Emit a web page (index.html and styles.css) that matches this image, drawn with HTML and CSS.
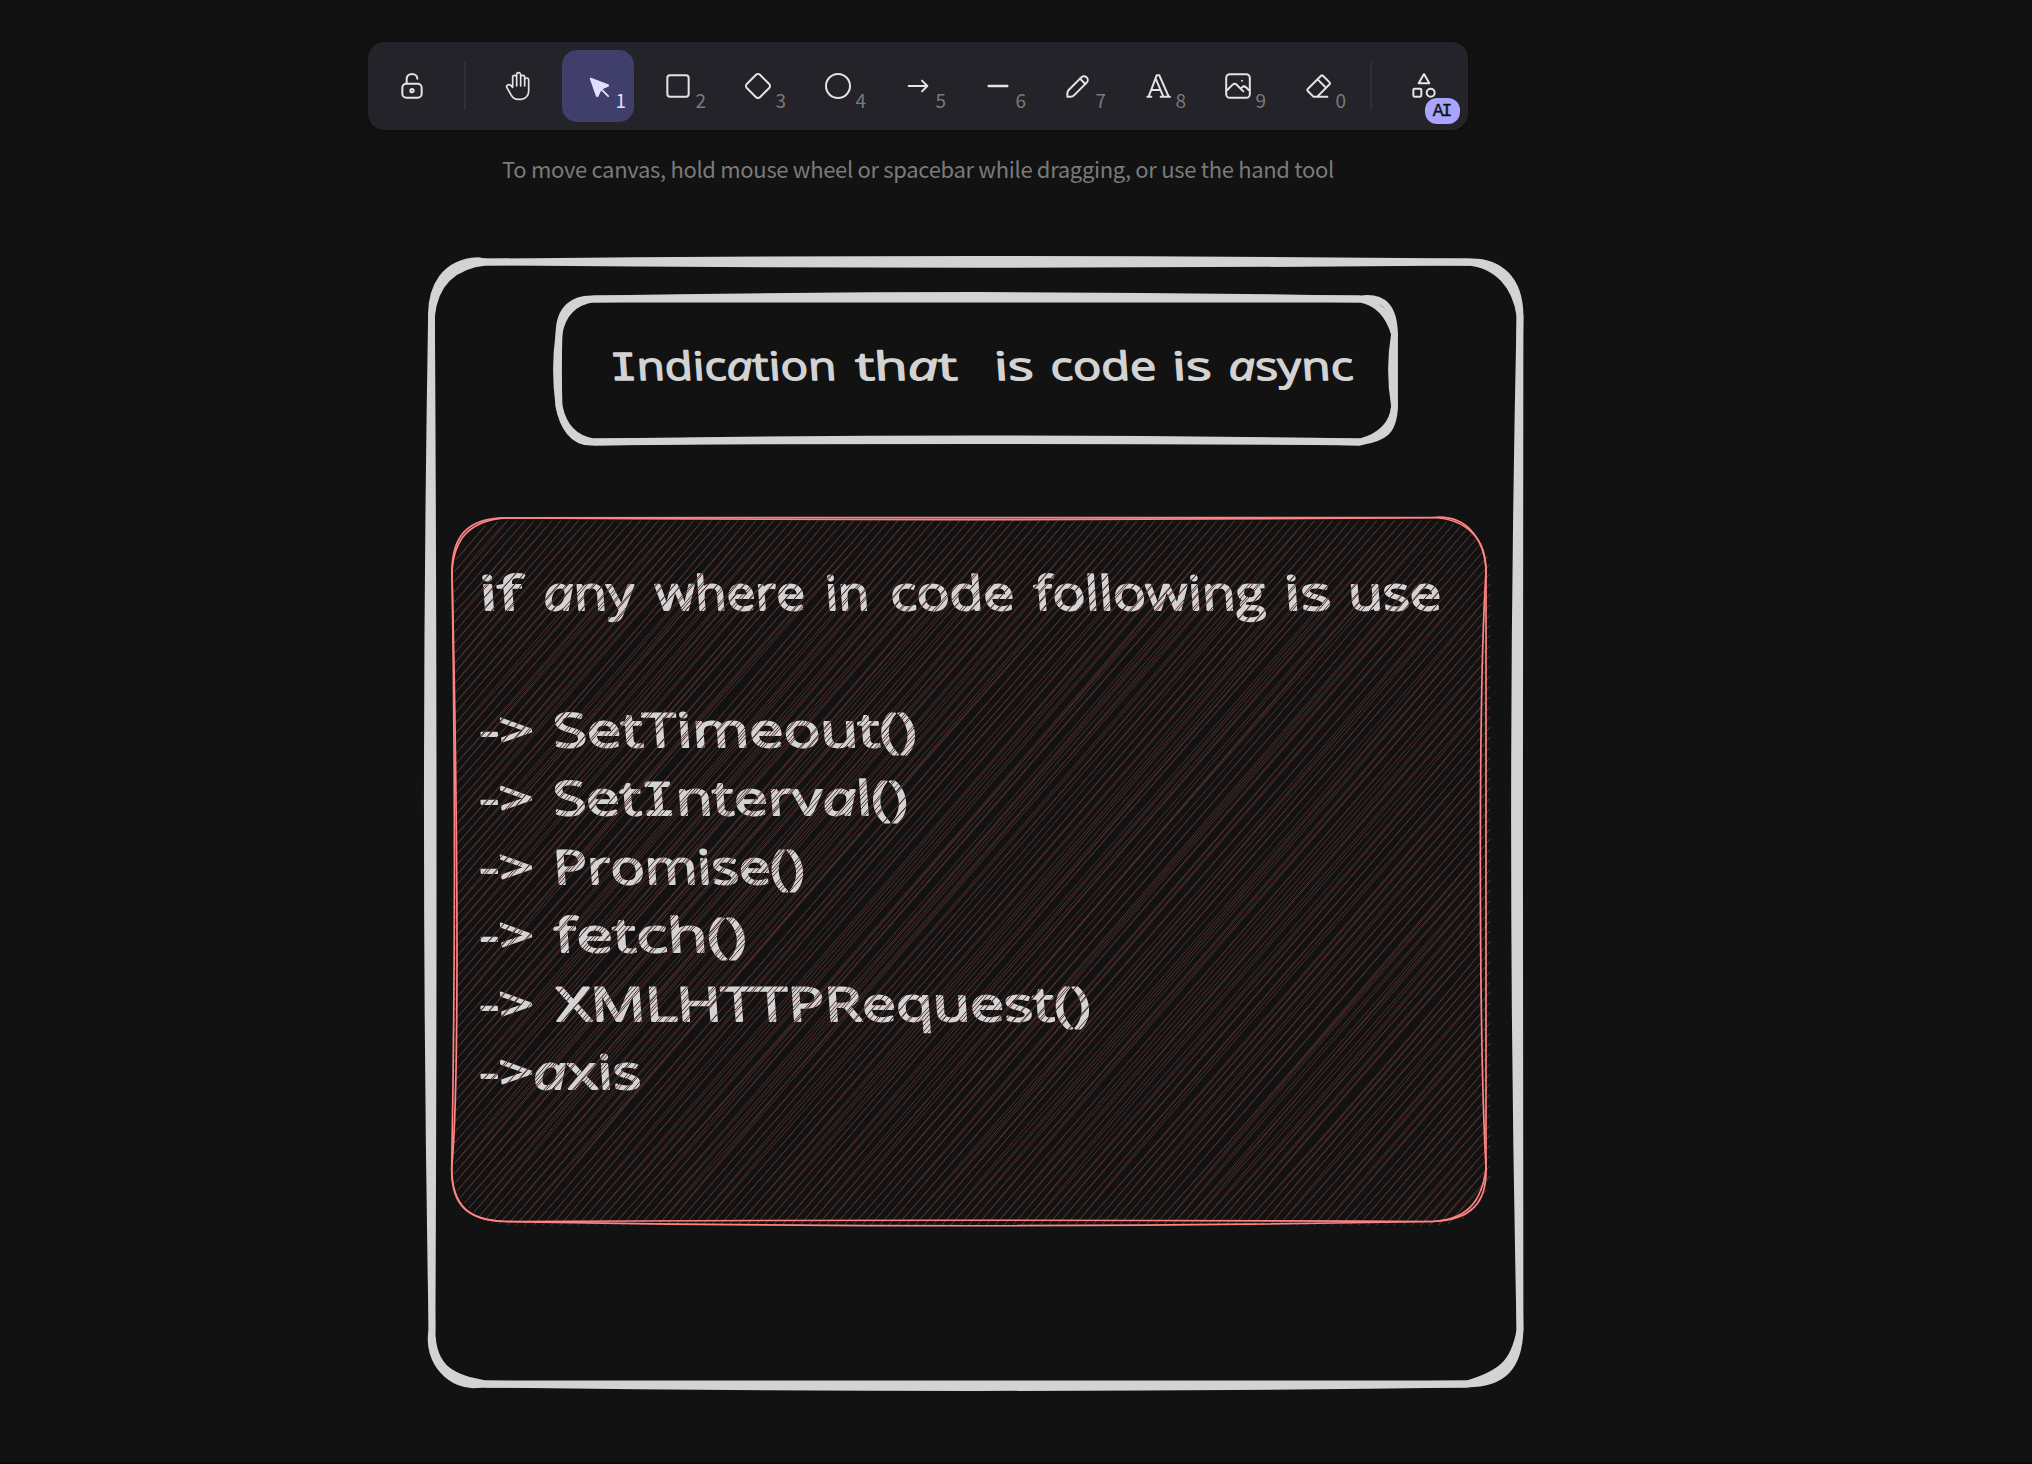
FILE: index.html
```html
<!DOCTYPE html>
<html lang="en">
<head>
<meta charset="utf-8">
<title>Whiteboard</title>
<link rel="stylesheet" href="styles.css">
</head>
<body>
<main class="board">
  <svg class="canvas" viewBox="0 0 2032 1464" aria-label="Drawing">
    <g class="frame">
      <path d="M486 262Q976 257 1467 262C1500 260 1520 280 1520 316Q1519 823 1520 1330C1519 1366 1504 1384 1467 1384Q976 1391 486 1384L478 1384.5C452 1388 426 1362 432 1330Q423 823 431.5 316C431 288 444 262 478 260.7L486 262"/>
      <path d="M486 262Q976 266.6 1467 262C1497 264 1516 286 1520 316Q1509 823 1520 1330C1514 1364 1500 1374 1467 1384Q976 1383.6 486 1384C456 1378 432 1372 432 1330Q434.5 823 431.5 316C434 290 447 266 486 262"/>
      <path d="M594 299Q976 292 1359.500 299C1384 295 1394 308 1394.500 334Q1394.500 370 1394.500 406C1394 432 1384 438 1360 442Q976 435.600 594 442C572 444 562 424 559 406Q554 370 559 334C559 308 574 298 594 299"/>
      <path d="M594 299Q976 299 1359.500 299C1376 302 1388 312 1394.500 334Q1388.500 370 1394.500 406C1393 424 1382 436 1360 442Q976 439 594 442C574 439 563 426 559 406Q558 370 559 334C562 316 572 302 594 299"/>
    </g>
    <g class="label title">
      <text x="611" y="380" textLength="226" lengthAdjust="spacingAndGlyphs"><tspan class="slab">I</tspan>ndic<tspan class="round">a</tspan>tion</text>
      <text x="856" y="380" textLength="102" lengthAdjust="spacingAndGlyphs">th<tspan class="round">a</tspan>t</text>
      <text x="995" y="380" textLength="39" lengthAdjust="spacingAndGlyphs">is</text>
      <text x="1051" y="380" textLength="106" lengthAdjust="spacingAndGlyphs">code</text>
      <text x="1173" y="380" textLength="39" lengthAdjust="spacingAndGlyphs">is</text>
      <text x="1229" y="380" textLength="125" lengthAdjust="spacingAndGlyphs"><tspan class="round">a</tspan>sync</text>
    </g>
    <g class="label">
      <text x="480" y="610" textLength="43" lengthAdjust="spacingAndGlyphs">if</text>
      <text x="544" y="610" textLength="91" lengthAdjust="spacingAndGlyphs"><tspan class="round">a</tspan>ny</text>
      <text x="656" y="610" textLength="150" lengthAdjust="spacingAndGlyphs">where</text>
      <text x="826" y="610" textLength="44" lengthAdjust="spacingAndGlyphs">in</text>
      <text x="891" y="610" textLength="124" lengthAdjust="spacingAndGlyphs">code</text>
      <text x="1035" y="610" textLength="231" lengthAdjust="spacingAndGlyphs">following</text>
      <text x="1285" y="610" textLength="47" lengthAdjust="spacingAndGlyphs">is</text>
      <text x="1349" y="610" textLength="93" lengthAdjust="spacingAndGlyphs">use</text>

      <text x="480" y="747" textLength="55" lengthAdjust="spacingAndGlyphs">-&gt;</text>
      <text x="554" y="747" textLength="363" lengthAdjust="spacingAndGlyphs">SetTimeout()</text>
      <text x="480" y="815" textLength="55" lengthAdjust="spacingAndGlyphs">-&gt;</text>
      <text x="554" y="815" textLength="354" lengthAdjust="spacingAndGlyphs">Set<tspan class="slab">I</tspan>nterv<tspan class="round">a</tspan>l()</text>
      <text x="480" y="884" textLength="55" lengthAdjust="spacingAndGlyphs">-&gt;</text>
      <text x="554" y="884" textLength="251" lengthAdjust="spacingAndGlyphs">Promise()</text>
      <text x="480" y="952" textLength="55" lengthAdjust="spacingAndGlyphs">-&gt;</text>
      <text x="555" y="952" textLength="192" lengthAdjust="spacingAndGlyphs">fetch()</text>
      <text x="480" y="1021" textLength="55" lengthAdjust="spacingAndGlyphs">-&gt;</text>
      <text x="557" y="1021" textLength="534" lengthAdjust="spacingAndGlyphs">XMLHTTPRequest()</text>
      <text x="480" y="1089" textLength="55" lengthAdjust="spacingAndGlyphs">-&gt;</text>
      <text x="534" y="1089" textLength="108" lengthAdjust="spacingAndGlyphs"><tspan class="round">a</tspan>xis</text>
    </g>
    <path class="hatch" id="hatch"/>
    <g class="red">
      <path d="M505 517.800Q970 518.800 1433 517.500C1466 519 1486 538 1486 571Q1485 870 1486 1168C1487 1202 1472 1220 1433 1221.500Q970 1230 505 1221.500C468 1220 451 1206 451.700 1168Q457 870 452 571.500C452 536 468 518 505 517.800"/>
      <path d="M505 517.800Q970 521.500 1433 517.500C1468 514 1485 541 1486 571C1478 700 1479 1040 1486 1168C1482 1204 1464 1220 1433 1221.500Q970 1219 505 1221.500C470 1221 452 1207 451.700 1168C461 1070 456 740 452 571.500C454 539 469 521 505 517.800"/>
    </g>
  </svg>

  <header class="top">
    <nav class="toolbar">
      <span class="tool"><svg viewBox="0 0 20 20" class="icon thin"><path d="M13.542 8.542H6.458a2.5 2.5 0 0 0-2.5 2.5v3.75a2.5 2.5 0 0 0 2.5 2.5h7.084a2.5 2.5 0 0 0 2.5-2.5v-3.75a2.5 2.5 0 0 0-2.5-2.5Z"/><path d="M10 13.958a1.042 1.042 0 1 0 0-2.083 1.042 1.042 0 0 0 0 2.083Z"/><path d="M6.667 8.333V5.417C6.667 3.806 8.159 2.5 10 2.5c1.841 0 3.333 1.306 3.333 2.917"/></svg></span>
      <i class="divider"></i>
      <span class="tool"><svg viewBox="0 0 24 24" class="icon thin"><path d="M8 13v-7.500a1.500 1.500 0 0 1 3 0v6.500M11 5.500v-2a1.500 1.500 0 1 1 3 0v8.500M14 5.500a1.500 1.500 0 0 1 3 0v6.500M17 7.500a1.500 1.500 0 0 1 3 0v8.500a6 6 0 0 1-6 6h-2h.208a6 6 0 0 1-5.012-2.700l-.196-.3c-.312-.479-1.407-2.388-3.286-5.728a1.500 1.500 0 0 1 .536-2.022a1.867 1.867 0 0 1 2.280.280l1.470 1.470"/></svg></span>
      <span class="tool active"><svg viewBox="0 0 22 22" class="icon thin solid"><path d="M6 6l4.153 11.793a.365.365 0 0 0 .331.207a.366.366 0 0 0 .332-.207l2.184-4.793l4.787-1.994a.355.355 0 0 0 .213-.323a.355.355 0 0 0-.213-.323l-11.787-4.360z"/><path d="M13.500 13.500l4.500 4.500"/></svg><b class="key">1</b></span>
      <span class="tool"><svg viewBox="0 0 24 24" class="icon"><rect x="4" y="4" width="16" height="16" rx="2"/></svg><b class="key">2</b></span>
      <span class="tool"><svg viewBox="0 0 24 24" class="icon"><path d="M10.500 20.400l-6.900-6.900c-.781-.781-.781-2.219 0-3l6.900-6.900c.781-.781 2.219-.781 3 0l6.900 6.900c.781.781.781 2.219 0 3l-6.900 6.900c-.781.781-2.219.781-3 0z"/></svg><b class="key">3</b></span>
      <span class="tool"><svg viewBox="0 0 24 24" class="icon"><circle cx="12" cy="12" r="9"/></svg><b class="key">4</b></span>
      <span class="tool"><svg viewBox="0 0 24 24" class="icon"><path d="M5 12h14M15 16l4-4M15 8l4 4"/></svg><b class="key">5</b></span>
      <span class="tool"><svg viewBox="0 0 20 20" class="icon"><path d="M4.167 10h11.666"/></svg><b class="key">6</b></span>
      <span class="tool"><svg viewBox="0 0 20 20" class="icon thin"><path d="m7.643 15.690 7.774-7.773a2.357 2.357 0 1 0-3.334-3.334L4.310 12.357a3.333 3.333 0 0 0-.977 2.357v1.953h1.953c.884 0 1.732-.352 2.357-.977Z"/><path d="m11.250 5.417 3.333 3.333"/></svg><b class="key">7</b></span>
      <span class="tool"><svg viewBox="0 0 24 24" class="icon"><path d="M4 20h3M14 20h7M6.900 15h6.900M10.200 6.300l5.800 13.700M5 20l6-16h2l7 16"/></svg><b class="key">8</b></span>
      <span class="tool"><svg viewBox="0 0 20 20" class="icon thin"><path d="M12.500 6.667h.01"/><rect x="2.625" y="2.625" width="14.750" height="14.750" rx="2.284"/><path d="m3.333 12.500 3.334-3.333c.773-.745 1.726-.745 2.500 0l4.166 4.166"/><path d="m11.667 11.667.833-.834c.774-.744 1.726-.744 2.500 0l1.667 1.667"/></svg><b class="key">9</b></span>
      <span class="tool"><svg viewBox="0 0 24 24" class="icon"><path d="M19 20h-10.500l-4.210-4.300a1 1 0 0 1 0-1.410l10-10a1 1 0 0 1 1.410 0l5 5a1 1 0 0 1 0 1.410l-9.200 9.300M18 13.300l-6.300-6.300"/></svg><b class="key">0</b></span>
      <i class="divider"></i>
      <span class="tool"><svg viewBox="0 0 24 24" class="icon"><path d="M12 3l-4 7h8z"/><circle cx="17" cy="17" r="3"/><rect x="4" y="14" width="6" height="6" rx="1"/></svg><b class="badge">AI</b></span>
    </nav>
    <p class="hint">To move canvas, hold mouse wheel or spacebar while dragging, or use the hand tool</p>
  </header>
</main>
<script src="hatch.js"></script>
</body>
</html>
```
FILE: styles.css
```css
body {
  margin: 0;
  background: #121212;
  font-family: "Noto Sans CJK JP", "Noto Sans", sans-serif;
}

.board {
  position: relative;
  box-sizing: border-box;
  width: 2032px;
  height: 1464px;
  overflow: hidden;
  border-bottom: 2px solid #09090a;
}

.canvas {
  position: absolute;
  top: 0;
  left: 0;
  width: 2032px;
  height: 1464px;
}

.frame,
.red,
.hatch {
  fill: none;
  stroke-linecap: round;
  stroke-linejoin: round;
}

.frame {
  stroke: #d3d3d3;
  stroke-width: 6.8;
}

.red {
  stroke: #ff8383;
  stroke-width: 1.7;
}

.hatch {
  stroke: #532f2f;
  stroke-width: 1;
}

.label {
  fill: #d3d3d3;
  stroke: #d3d3d3;
  stroke-width: 1.9;
  stroke-linejoin: round;
  font: 400 47px "Open Sans", "Noto Sans", sans-serif;
}

.label text {
  transform: skewX(4deg);
  transform-box: fill-box;
  transform-origin: 0 75%;
}

.title {
  font-size: 39px;
  stroke-width: 1.3;
}

.slab {
  font-family: "DejaVu Sans Mono", monospace;
  font-size: 0.95em;
}

/* single-storey letterform */
.round {
  font-style: italic;
}

.top {
  position: relative;
  display: flex;
  flex-direction: column;
  align-items: center;
  width: 1100px;
  margin-left: 368px;
  padding-top: 42px;
}

.toolbar {
  display: flex;
  align-items: center;
  gap: 8px;
  box-sizing: border-box;
  width: 1100px;
  height: 88px;
  padding: 8px;
  border-radius: 16px;
  background: #232329;
  box-shadow: 0 0 2px rgba(0, 0, 0, 0.5), 0 10px 20px rgba(0, 0, 0, 0.06);
}

.tool {
  position: relative;
  display: flex;
  align-items: center;
  justify-content: center;
  width: 72px;
  height: 72px;
  border-radius: 15px;
  color: #e3e3e8;
}

.active {
  background: #403e6a;
  color: #e0dfff;
}

.icon {
  width: 32px;
  height: 32px;
  fill: none;
  stroke: currentColor;
  stroke-width: 1.5;
  stroke-linecap: round;
  stroke-linejoin: round;
}

.thin {
  stroke-width: 1.25;
}

.solid {
  fill: currentColor;
}

.divider {
  width: 2px;
  height: 48px;
  margin: 0 8px;
  background: #2e2d39;
}

.key {
  position: absolute;
  right: 8px;
  bottom: 12px;
  color: #7a7a7a;
  font-size: 19px;
  font-weight: 400;
  line-height: 20px;
}

.active .key {
  color: #e0dfff;
}

.badge {
  position: absolute;
  right: 0;
  bottom: -2px;
  width: 35px;
  height: 26px;
  border-radius: 12px;
  background: #a8a5ff;
  color: #121212;
  font: 400 18px/26px "Liberation Mono", monospace;
  -webkit-text-stroke: 0.4px #121212;
  letter-spacing: -2px;
  text-indent: -2px;
  text-align: center;
}

.hint {
  margin: 20px 0 0;
  color: #7a7a7a;
  font-size: 22px;
  line-height: 36px;
  letter-spacing: -0.32px;
  white-space: nowrap;
}
```
FILE: hatch.js
```js
// Sketchy diagonal fill of the red rounded box: every line is drawn twice,
// each time with its own slight bow.
(function () {
  var box = { l: 454, t: 521, r: 1490, b: 1225, rad: 53 };
  var scale = 1.7;
  var step = 8.87;
  var slope = Math.tan(49 * Math.PI / 180);
  var seed = 7;

  function rand() {
    seed = (seed * 48271) % 2147483647;
    return seed / 2147483647;
  }

  function inside(x, y) {
    if (x < box.l || x > box.r || y < box.t || y > box.b) return false;
    var dx = Math.max(box.l + box.rad - x, x - box.r + box.rad, 0);
    var dy = Math.max(box.t + box.rad - y, y - box.b + box.rad, 0);
    return dx * dx + dy * dy <= box.rad * box.rad;
  }

  function stroke(x1, y1, x2, y2, half) {
    var len = Math.hypot(x2 - x1, y2 - y1) / scale;
    var gain = len < 200 ? 0.9 : Math.max(0.7, 1 - 0.0005 * len);
    var off = Math.min(2, len / 10) * scale * (half ? 0.5 : 1);
    function jitter(v) { return gain * (rand() * 2 - 1) * v; }
    var dp = 0.2 + rand() * 0.2;
    var mx = jitter(2 * (y2 - y1) / 200);
    var my = jitter(2 * (x1 - x2) / 200);
    function point(k) {
      return (mx + x1 + (x2 - x1) * k + jitter(off)).toFixed(1) + " " +
             (my + y1 + (y2 - y1) * k + jitter(off)).toFixed(1);
    }
    return "M" + x1.toFixed(1) + " " + y1.toFixed(1) + "C" + point(dp) + " " +
           point(2 * dp) + " " + x2.toFixed(1) + " " + y2.toFixed(1);
  }

  var d = "";
  for (var c = box.l; c < box.r + (box.b - box.t) / slope; c += step) {
    var first = null, last = null;
    for (var y = box.t; y <= box.b; y += 0.5) {
      var x = c - (y - box.t) / slope;
      if (inside(x, y)) {
        if (!first) first = [x, y];
        last = [x, y];
      }
    }
    if (first && last[1] - first[1] > 3) {
      d += stroke(last[0], last[1], first[0], first[1], false);
      d += stroke(last[0], last[1], first[0], first[1], true);
    }
  }
  document.getElementById("hatch").setAttribute("d", d);
})();
```
